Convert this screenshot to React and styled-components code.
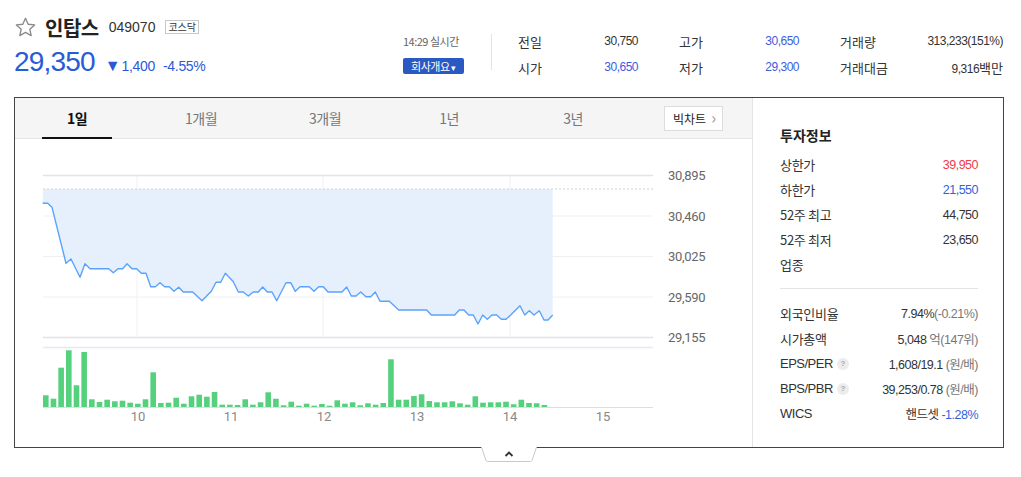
import styled, { createGlobalStyle } from "styled-components";

const GlobalStyle = createGlobalStyle`
	body {
		margin: 0;
		background: #fff;
		font-family: "Liberation Sans", "Noto Sans CJK KR", sans-serif;
		color: #333;
	}
`;

const BLUE = "#2a5bd7";

const quotes = [
	[
		{ label: "전일", value: "30,750" },
		{ label: "고가", value: "30,650", tone: "blue" },
		{ label: "거래량", value: "313,233(151%)" },
	],
	[
		{ label: "시가", value: "30,650", tone: "blue" },
		{ label: "저가", value: "29,300", tone: "blue" },
		{ label: "거래대금", value: "9,316", unit: "백만" },
	],
];

const tabs = ["1일", "1개월", "3개월", "1년", "3년"];

const linePoints = [
	[42.7, 203.3], [47.7, 203.3], [52, 207.3], [66, 263.3], [71, 259], [80, 277.3],
	[85, 263.7], [90, 268.7], [108.7, 268.7], [113.3, 272.7], [118, 268.7], [122.7, 268.7],
	[127, 263.7], [132, 268.7], [136.7, 268.7], [141.3, 273.3], [146, 273.3], [150.7, 286.7],
	[155.3, 286.7], [160, 282.7], [164.7, 286.7], [169.3, 286.7], [174, 291.3], [178.7, 287.3],
	[183.3, 292], [192.7, 292], [202, 300.7], [211.3, 291.3], [216, 282.3], [220.7, 282.3],
	[225.3, 273.3], [233.3, 281.7], [238.3, 292], [243.3, 292], [248.3, 296], [253.3, 292],
	[258.3, 292], [262.7, 287], [267.3, 292], [272, 292], [276.7, 300.7], [286, 282.7],
	[290.7, 282.7], [295.3, 291.3], [300, 286.7], [309.3, 286.7], [314, 291.3], [318.7, 286.7],
	[323.3, 286.7], [328, 292], [342, 292], [346.7, 287], [351.3, 296], [356, 296],
	[360.7, 292], [366, 296.7], [370.7, 296.7], [375.3, 292], [380, 301.3], [389.3, 301.3],
	[398.7, 310], [426.7, 310], [431.3, 315], [454.7, 315], [459.3, 310], [464, 310],
	[468.7, 315], [473.3, 315], [478, 324], [482.7, 315], [487.3, 319.3], [492, 315],
	[496.7, 315], [501.3, 319.3], [506, 319.3], [510.7, 315], [520, 305.7], [524.7, 315],
	[529.3, 310.7], [534, 315], [539.3, 310.7], [544, 320], [548, 320], [552.7, 315],
];

const volumes = [
	11.7, 8.3, 39.3, 56.7, 21.7, 55, 7.7, 5, 7.3, 5.7, 6.3, 4.3, 3.3, 7.7, 34.7, 4, 4.3,
	9.3, 3.3, 10.7, 12.3, 10.3, 15, 2.3, 2.3, 2, 7.7, 2.3, 4.7, 14.7, 8.3, 1.7, 5.3, 1.3,
	3.3, 1.3, 3, 1.3, 6.7, 3.3, 4.7, 1.7, 3.7, 2.3, 4, 47.7, 7.3, 7.3, 11, 12.7, 6, 4.7,
	4.7, 5.7, 3.7, 2.3, 10.7, 4.3, 4.7, 4.7, 5.3, 2.7, 7.3, 4, 3.7, 2,
];

const priceTicks = [
	{ y: 175.5, label: "30,895", strong: true },
	{ y: 216, label: "30,460" },
	{ y: 256.5, label: "30,025" },
	{ y: 297, label: "29,590" },
	{ y: 337.5, label: "29,155", strong: true },
];

const hourX = (h) => 43 + (h - 9) * 93;

const investA = [
	{ label: "상한가", value: "39,950", tone: "red" },
	{ label: "하한가", value: "21,550", tone: "blue" },
	{ label: "52주 최고", value: "44,750" },
	{ label: "52주 최저", value: "23,650" },
	{ label: "업종", value: "" },
];

const StarIcon = () => (
	<svg width="23" height="23" viewBox="0 0 24 24">
		<path
			d="M12 2.4l2.8 6.2 6.7.7-5 4.5 1.4 6.7L12 17.1l-5.9 3.4 1.4-6.7-5-4.5 6.7-.7z"
			fill="none"
			stroke="#8a8a8a"
			strokeWidth="1.4"
			strokeLinejoin="round"
		/>
	</svg>
);

const PriceChart = () => {
	const line = linePoints.map((p) => p.join(",")).join(" ");
	const area = `43,189 ${line} 552.7,189`;
	return (
		<ChartSvg viewBox="15 139 736 308" width="736" height="308">
			{[137, 323, 510].map((x) => (
				<line key={x} x1={x} x2={x} y1={175} y2={337} stroke="#f0f0f5" />
			))}
			{priceTicks.map((t) => (
				<line
					key={t.y}
					x1={43}
					x2={653}
					y1={t.y}
					y2={t.y}
					stroke={t.strong ? "#e2e2ec" : "#f0f0f4"}
					strokeWidth={t.strong ? 1.5 : 1}
				/>
			))}
			<polygon points={area} fill="#e6f0fd" />
			<line x1={43} x2={653} y1={189} y2={189} stroke="#cfcfd6" strokeDasharray="2 2" />
			<polyline points={line} fill="none" stroke="#5ba2fb" strokeWidth="1.4" strokeLinejoin="round" />
			{priceTicks.map((t) => (
				<text key={t.label} x={668} y={t.y + 4.5} fontSize="13" fill="#666" fontFamily="Roboto, sans-serif" letterSpacing="-0.3">
					{t.label}
				</text>
			))}
			<line x1={43} x2={653} y1={347.5} y2={347.5} stroke="#e8e8f0" strokeWidth="1.5" />
			{volumes.map((h, i) => (
				<rect key={i} x={43 + i * 7.67} y={407 - h} width={5.6} height={h} fill="#55d17e" />
			))}
			<line x1={43} x2={653} y1={407.5} y2={407.5} stroke="#dedede" />
			{[10, 11, 12, 13, 14, 15].map((h) => (
				<text key={h} x={hourX(h) + 2} y={421} fontSize="13" fill="#888" textAnchor="middle" fontFamily="Roboto, sans-serif">
					{h}
				</text>
			))}
		</ChartSvg>
	);
};

const App = () => {
	return (
		<>
			<GlobalStyle />
			<Header>
				<Summary>
					<TitleRow>
						<StarIcon />
						<Name>인탑스</Name>
						<Code>049070</Code>
						<Market>코스닥</Market>
					</TitleRow>
					<PriceRow>
						<Price>29,350</Price>
						<Change $first>
							<Arrow>▼</Arrow>1,400
						</Change>
						<Change>-4.55%</Change>
					</PriceRow>
				</Summary>
				<Realtime>
					<Time>14:29 실시간</Time>
					<CompanyButton>
						회사개요 <Caret>▾</Caret>
					</CompanyButton>
				</Realtime>
				<Divider />
				<QuoteTable>
					{quotes.flat().map((q) => (
						<QuoteCell key={q.label}>
							<QuoteLabel>{q.label}</QuoteLabel>
							<QuoteValue $tone={q.tone}>
								{q.value}
								{q.unit && <Unit>{q.unit}</Unit>}
							</QuoteValue>
						</QuoteCell>
					))}
				</QuoteTable>
			</Header>

			<Board>
				<ChartPane>
					<TabBar>
						{tabs.map((t, i) => (
							<Tab key={t} $active={i === 0}>
								{t}
							</Tab>
						))}
						<BigChart>
							빅차트 <Chevron>›</Chevron>
						</BigChart>
					</TabBar>
					<PriceChart />
				</ChartPane>
				<InfoPane>
					<InfoTitle>투자정보</InfoTitle>
					{investA.map((r) => (
						<InfoRow key={r.label}>
							<span>{r.label}</span>
							<InfoValue $tone={r.tone}>{r.value}</InfoValue>
						</InfoRow>
					))}
					<InfoRule />
					<InfoRow>
						<span>외국인비율</span>
						<InfoValue>
							7.94%<Muted>(-0.21%)</Muted>
						</InfoValue>
					</InfoRow>
					<InfoRow>
						<span>시가총액</span>
						<InfoValue>
							5,048 <Muted>억(147위)</Muted>
						</InfoValue>
					</InfoRow>
					<InfoRow>
						<Label>
							EPS/PER <Help>?</Help>
						</Label>
						<InfoValue>
							1,608/19.1 <Muted>(원/배)</Muted>
						</InfoValue>
					</InfoRow>
					<InfoRow>
						<Label>
							BPS/PBR <Help>?</Help>
						</Label>
						<InfoValue>
							39,253/0.78 <Muted>(원/배)</Muted>
						</InfoValue>
					</InfoRow>
					<InfoRow>
						<Label>WICS</Label>
						<InfoValue>
							핸드셋 <Down>-1.28%</Down>
						</InfoValue>
					</InfoRow>
				</InfoPane>
			</Board>
			<Toggle>
				<svg width="56" height="15" viewBox="0 0 56 15">
					<path d="M0.5 0 L5 13.5 Q5.5 14.5 7 14.5 L49 14.5 Q50.5 14.5 51 13.5 L55.5 0" fill="#fff" stroke="#c8c8c8" />
					<path d="M24.5 9 L28 5.5 L31.5 9" fill="none" stroke="#333" strokeWidth="1.8" />
				</svg>
			</Toggle>
		</>
	);
};

const Header = styled.header`
	display: flex;
	align-items: flex-start;
	padding: 14px 0 0 14px;
	height: 97px;
	box-sizing: border-box;
`;

const Summary = styled.div`
	width: 389px;
	display: flex;
	flex-direction: column;
`;

const TitleRow = styled.div`
	display: flex;
	align-items: center;
	height: 26px;
`;

const Name = styled.h1`
	margin: 0 0 0 8px;
	font-size: 20px;
	font-weight: 700;
	color: #222;
	font-family: "Noto Sans CJK KR", sans-serif;
	letter-spacing: -0.5px;
`;

const Code = styled.span`
	margin-left: 10px;
	font-size: 14px;
	color: #333;
`;

const Market = styled.span`
	margin-left: 10px;
	font-size: 10px;
	line-height: 12px;
	padding: 0 2px;
	border: 1px solid #c8c8c8;
	color: #333;
	font-family: "Noto Sans CJK KR", sans-serif;
`;

const PriceRow = styled.div`
	display: flex;
	align-items: baseline;
	margin-top: 6px;
`;

const Price = styled.span`
	font-size: 28px;
	color: ${BLUE};
	letter-spacing: -0.8px;
`;

const Change = styled.span`
	margin-left: ${(p) => (p.$first ? "10px" : "8px")};
	font-size: 14px;
	color: ${BLUE};
	letter-spacing: -0.3px;
`;

const Arrow = styled.span`
	font-size: 16px;
	margin-right: 1px;
`;

const Realtime = styled.div`
	width: 61px;
	padding-top: 19px;
	display: flex;
	flex-direction: column;
	align-items: flex-start;
	gap: 9px;
`;

const Time = styled.span`
	font-size: 11px;
	color: #666;
	white-space: nowrap;
	letter-spacing: -0.5px;
	font-family: "Noto Sans CJK KR", sans-serif;
`;

const CompanyButton = styled.button`
	width: 61px;
	height: 16px;
	padding: 0;
	border: 0;
	border-radius: 2px;
	background: #2b59c3;
	color: #fff;
	font-size: 11px;
	letter-spacing: -0.5px;
	font-family: "Noto Sans CJK KR", sans-serif;
	line-height: 16px;
`;

const Caret = styled.span`
	font-size: 9px;
`;

const Divider = styled.div`
	width: 1px;
	height: 36px;
	margin: 20px 0 0 27px;
	background: #e2e2e2;
`;

const QuoteTable = styled.div`
	display: grid;
	grid-template-columns: 120px 120px 163px;
	grid-auto-rows: 26px;
	column-gap: 41px;
	margin: 14px 0 0 26px;
`;

const QuoteCell = styled.div`
	display: flex;
	justify-content: space-between;
	align-items: center;
`;

const QuoteLabel = styled.span`
	font-size: 13px;
	color: #333;
	font-family: "Noto Sans CJK KR", sans-serif;
`;

const QuoteValue = styled.span`
	font-size: 12px;
	letter-spacing: -0.5px;
	color: ${(p) => (p.$tone === "blue" ? "#3d5ce0" : "#333")};
`;

const Unit = styled.span`
	font-size: 13px;
	letter-spacing: 0;
	font-family: "Noto Sans CJK KR", sans-serif;
`;

const Board = styled.section`
	display: flex;
	margin-left: 14px;
	width: 990px;
	height: 351px;
	box-sizing: border-box;
	border: 1px solid #444;
`;

const ChartPane = styled.div`
	width: 737px;
	display: flex;
	flex-direction: column;
`;

const TabBar = styled.div`
	display: flex;
	align-items: center;
	height: 40px;
	background: #f5f5f5;
	border-bottom: 1px solid #e4e4e4;
`;

const Tab = styled.div`
	position: relative;
	width: 124px;
	height: 40px;
	display: flex;
	align-items: center;
	justify-content: center;
	font-size: 14px;
	font-family: "Noto Sans CJK KR", sans-serif;
	font-weight: ${(p) => (p.$active ? 700 : 400)};
	color: ${(p) => (p.$active ? "#111" : "#777")};
	letter-spacing: -0.5px;

	&::after {
		content: "";
		position: absolute;
		left: 27px;
		right: 27px;
		bottom: -1px;
		height: 2px;
		background: ${(p) => (p.$active ? "#111" : "transparent")};
	}
`;

const BigChart = styled.button`
	margin-left: 29px;
	width: 59px;
	height: 25px;
	padding: 0 0 0 2px;
	display: flex;
	align-items: center;
	justify-content: center;
	gap: 5px;
	background: #fff;
	border: 1px solid #dcdcdc;
	font-size: 12px;
	color: #222;
	font-family: "Noto Sans CJK KR", sans-serif;
`;

const Chevron = styled.span`
	font-size: 16px;
	color: #999;
	line-height: 1;
	margin-top: -2px;
`;

const ChartSvg = styled.svg`
	display: block;
`;

const InfoPane = styled.aside`
	flex: 1;
	border-left: 1px solid #e4e4e4;
	padding: 27px 25px 0 27px;
	font-family: "Noto Sans CJK KR", sans-serif;
	font-size: 13px;
	color: #333;
`;

const InfoTitle = styled.h2`
	margin: 0 0 7px;
	font-size: 14px;
	font-weight: 700;
	line-height: 20px;
	color: #222;
`;

const InfoRow = styled.div`
	display: flex;
	justify-content: space-between;
	align-items: center;
	height: 25px;
	letter-spacing: -0.3px;
`;

const Label = styled.span`
	display: flex;
	align-items: center;
	gap: 4px;
	font-family: "Liberation Sans", sans-serif;
	letter-spacing: -0.5px;
`;

const InfoValue = styled.span`
	font-family: "Liberation Sans", "Noto Sans CJK KR", sans-serif;
	font-size: 12.5px;
	letter-spacing: -0.5px;
	color: ${(p) => (p.$tone === "red" ? "#f23b4b" : p.$tone === "blue" ? "#2f63d9" : "#333")};
`;

const Muted = styled.span`
	color: #777;
`;

const Down = styled.span`
	color: #2f63d9;
`;

const Help = styled.span`
	width: 12px;
	height: 12px;
	border-radius: 50%;
	background: #ececec;
	color: #aaa;
	font-size: 8px;
	font-weight: 700;
	display: inline-flex;
	align-items: center;
	justify-content: center;
	letter-spacing: 0;
`;

const InfoRule = styled.div`
	height: 1px;
	background: #e4e4e4;
	margin: 11px 0 12px;
`;

const Toggle = styled.div`
	display: flex;
	justify-content: center;
	width: 990px;
	margin: -1px 0 0 14px;
`;

export default App;
